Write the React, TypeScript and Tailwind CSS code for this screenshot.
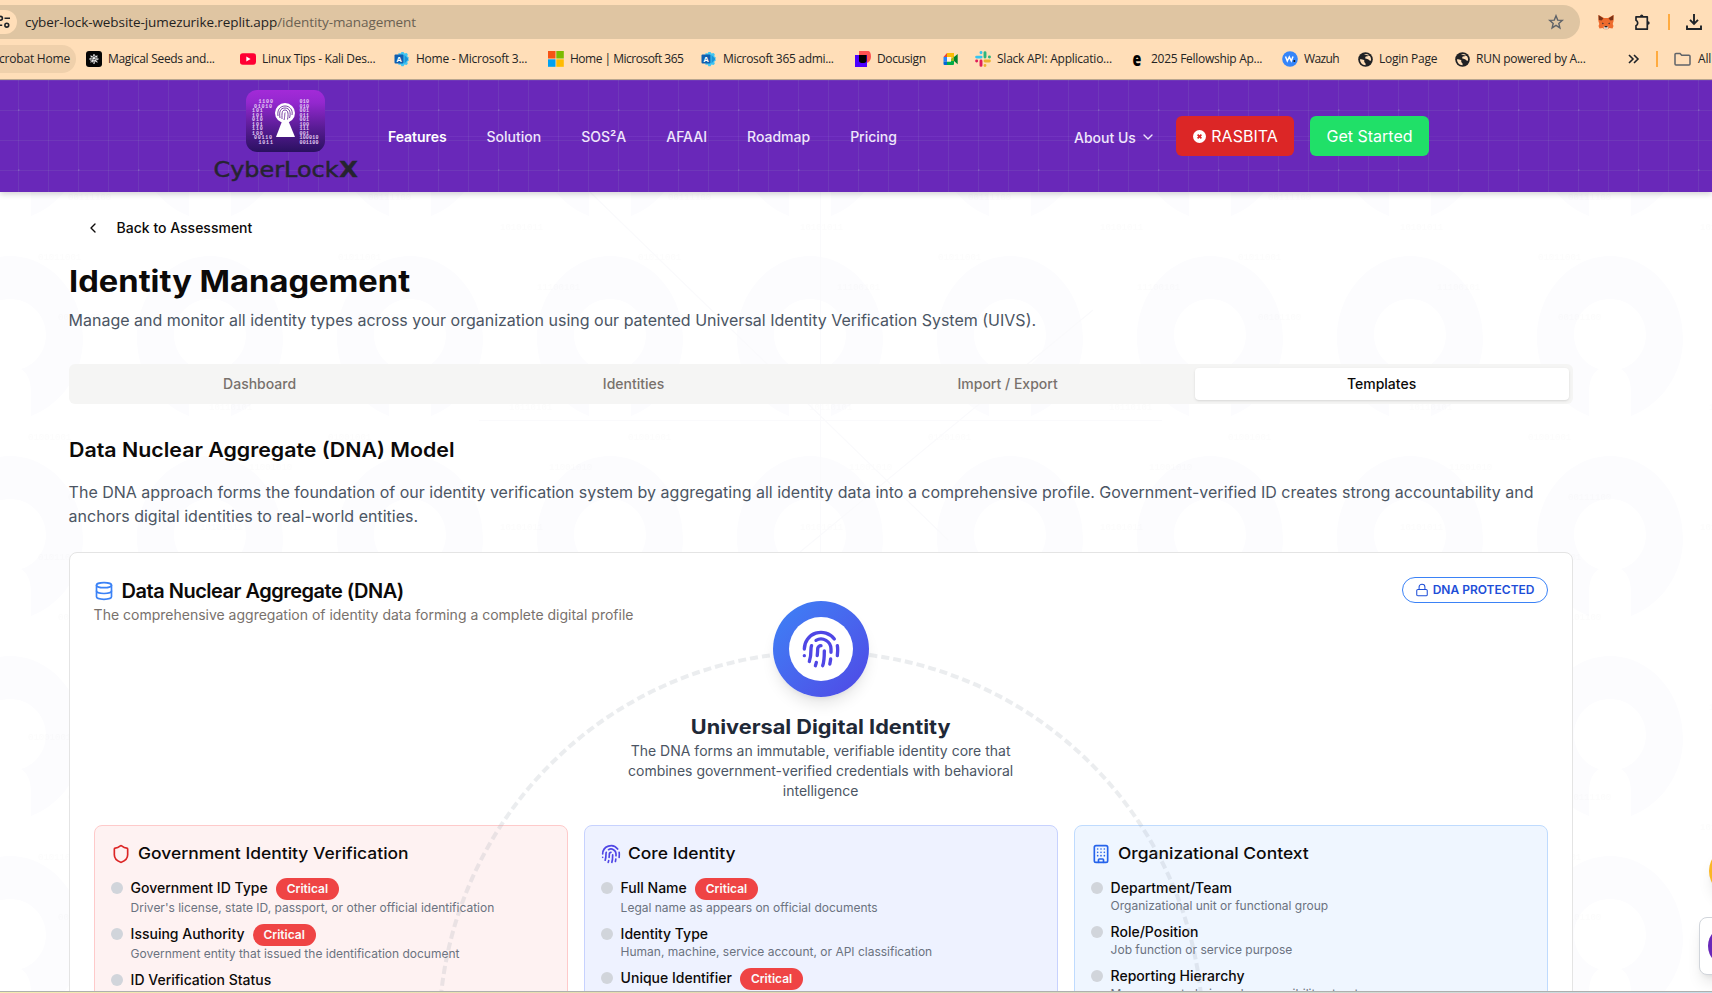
import React from "react";
import {
  Building,
  ChevronDown,
  ChevronLeft,
  Database,
  Fingerprint,
  Lock,
  Shield,
} from "lucide-react";

/* ---------- Browser chrome icons ---------- */

const TuneIcon = () => (
  <svg width="16" height="16" viewBox="0 0 16 16" fill="none" stroke="#1f2328" strokeWidth="1.6" className="shrink-0">
    <circle cx="5.5" cy="4.3" r="1.9" />
    <path d="M9.5 4.3H15M1 11.2h6.2" />
    <circle cx="11.8" cy="11.2" r="1.9" />
  </svg>
);

const StarIcon = () => (
  <svg width="16" height="16" viewBox="0 0 16 16" fill="none" stroke="#5f6368" strokeWidth="1.4">
    <path d="M8 1.8l1.7 4.3 4.6.3-3.5 3 1.1 4.5L8 11.4l-3.9 2.5 1.1-4.5-3.5-3 4.6-.3z" />
  </svg>
);

const FoxIcon = () => (
  <svg width="16" height="16" viewBox="0 0 16 16">
    <path d="M0.5 1L6 4h4l5.5-3 .1 6-.9 3 .8 2-1 2.5-3-.6-2 1.4h-3L4.5 13.9 1.5 14.5.5 12l.8-2L.4 7z" fill="#ee6b2d" />
    <path d="M.5 1L5.5 4.5 3.5 6.5.8 6zM15.5 1l-5 3.5 2 2 2.7-.5z" fill="#7a3318" />
    <path d="M5.5 12.5h5L10 15H6z" fill="#d9cfc6" />
    <path d="M4 8.5l2 1.3-1.5.4zM12 8.5l-2 1.3 1.5.4z" fill="#2b2b33" />
    <path d="M6.5 12h3l-.5 1.3H7z" fill="#222" />
  </svg>
);

const PuzzleIcon = () => (
  <svg width="18" height="18" viewBox="0 0 18 18" fill="none" stroke="#1f2328" strokeWidth="1.7" strokeLinejoin="round">
    <path d="M3 3.8H14.300V16.200H3V12.800c1.100-.6 1.700-1.600 1.700-2.800S4.100 7.800 3 7.200z" />
    <path d="M7 3.300a1.700 1.700 0 0 1 3.400 0zM15 8.300a1.700 1.700 0 0 1 0 3.400z" fill="#1f2328" stroke="none" />
  </svg>
);

const DownloadIcon = () => (
  <svg width="16" height="16" viewBox="0 0 16 16" fill="none" stroke="#1f2328" strokeWidth="1.9">
    <path d="M8 0v9M4 5.8l4 4 4-4M1 11.5V15h14v-3.5" />
  </svg>
);

const FolderIcon = () => (
  <svg width="17" height="14" viewBox="0 0 17 14" fill="none" stroke="#5f6368" strokeWidth="1.5">
    <path d="M1 2.5a1 1 0 0 1 1-1h4l1.7 1.8H15a1 1 0 0 1 1 1V12a1 1 0 0 1-1 1H2a1 1 0 0 1-1-1z" />
  </svg>
);

const SeedsIcon = () => (
  <svg width="16" height="16" viewBox="0 0 16 16">
    <rect width="16" height="16" rx="3" fill="#050505" />
    <g stroke="#f4f4f4" strokeWidth="1.1" fill="none">
      <path d="M8 3v10M3.2 8h9.6M4.6 4.6l6.8 6.8M11.4 4.6l-6.8 6.8" strokeDasharray="2.4 0.6" />
      <circle cx="8" cy="8" r="3.2" strokeDasharray="1.2 0.8" />
    </g>
  </svg>
);

const YoutubeIcon = () => (
  <svg width="16" height="16" viewBox="0 0 16 16">
    <rect y="2.2" width="16" height="11.6" rx="2.8" fill="#ff0033" />
    <path d="M6.3 5.5v5L10.6 8z" fill="#fff" />
  </svg>
);

const AdminIcon = () => (
  <svg width="16" height="16" viewBox="0 0 16 16">
    <path d="M4.5 2l2 .6L7.5 1h2l1 1.6 2-.6 1.3 1.3-.6 2L15 6.8 14 8l1 1.3-1.8 1.4.6 2L12.5 14l-2-.5-1 1.7h-2l-1-1.7-2 .5z" fill="#41c5f2" />
    <path d="M10.5 4l4 4-4 4.5z" fill="#1a93d8" />
    <rect x="0.5" y="3.5" width="9" height="9" rx="1" fill="#0f5fb0" />
    <text x="5" y="10.6" fontSize="7.5" fontWeight="700" textAnchor="middle" fill="#fff" fontFamily="Open Sans, sans-serif">A</text>
  </svg>
);

const MicrosoftIcon = () => (
  <svg width="16" height="16" viewBox="0 0 16 16">
    <rect width="7.5" height="7.5" fill="#f65314" />
    <rect x="8.3" width="7.5" height="7.5" fill="#7cbb00" />
    <rect y="8.3" width="7.5" height="7.5" fill="#00a1f1" />
    <rect x="8.3" y="8.3" width="7.5" height="7.5" fill="#ffbb00" />
  </svg>
);

const DocusignIcon = () => (
  <svg width="16" height="16" viewBox="0 0 16 16">
    <path d="M4 0h9.5C15 0 16 2.5 16 5.5 16 9 14 12 11 12H4z" fill="#ff5252" />
    <rect y="4" width="12" height="12" fill="#4c00ff" />
    <path d="M4 4h7.5v5.5c0 1.5-1 2.5-2.5 2.5H6.5C5 12 4 11 4 9.5z" fill="#000" />
  </svg>
);

const MeetIcon = () => (
  <svg width="16" height="16" viewBox="0 0 16 16">
    <path d="M4 2h7v4H4z" fill="#fbbc04" />
    <path d="M4 2v4H.5z" fill="#ea4335" />
    <path d="M.5 6H4v4.5H.5z" fill="#2684fc" />
    <path d="M.5 10.5H4V14H1.5a1 1 0 0 1-1-1z" fill="#0066da" />
    <path d="M4 10.5h4V8l3-2.5V13a1 1 0 0 1-1 1H4z" fill="#00ac47" />
    <path d="M11 6l3.7-3v10.3L11 10z" fill="#00832d" />
    <path d="M8 6h3v4H8z" fill="#fbbc04" opacity=".6" />
    <path d="M4 6h4v4.5H4z" fill="#fff3e2" />
  </svg>
);

const SlackIcon = () => (
  <svg width="16" height="16" viewBox="0 0 16 16" strokeWidth="2.9" strokeLinecap="round" fill="none">
    <path d="M1.6 6.1h4.5M6 1.5v.2" stroke="#36c5f0" />
    <path d="M10 1.6v4.5M14.4 6h.1" stroke="#2eb67d" />
    <path d="M14.4 10H10M10 14.4v.1" stroke="#ecb22e" />
    <path d="M6 14.4V10M1.6 10h.1" stroke="#e01e5a" />
  </svg>
);

const WazuhIcon = () => (
  <svg width="16" height="16" viewBox="0 0 16 16">
    <circle cx="8" cy="8" r="7.8" fill="#3585f9" />
    <path d="M3.5 5.5L5.3 10l2-4 2 4L11 5.5" stroke="#fff" strokeWidth="1.5" fill="none" />
    <circle cx="12.3" cy="10" r="1" fill="#111" />
  </svg>
);

const GlobeIcon = () => (
  <svg width="15" height="15" viewBox="0 0 15 15">
    <circle cx="7.5" cy="7.5" r="7.3" fill="#202124" />
    <path d="M2 7.2c1.5 0 3.2.2 4 .9.9.7-.3 1.7.6 2.4.8.6 1.3 1.2.9 2.7C4.3 13.1 2 10.5 2 7.2z" fill="#ffdeb8" />
    <path d="M6 2.3c1.7-.6 3.5-.3 4.7.5l-1 1.4-2 .4L7 6.2l2.2.9c1.2 0 1.5 1.1 2.3 1.5l1.5.1c.3-2-.3-3.7-1.3-4.7" fill="#ffdeb8" />
  </svg>
);

/* ---------- Browser chrome ---------- */

const bookmarks: { icon: React.ReactNode; label: string; item: string; text: string }[] = [
  { icon: <SeedsIcon />, label: "Magical Seeds and...", item: "w-[154px]", text: "tracking-[-0.3px]" },
  { icon: <YoutubeIcon />, label: "Linux Tips - Kali Des...", item: "w-[154px]", text: "tracking-[-0.28px]" },
  { icon: <AdminIcon />, label: "Home - Microsoft 3...", item: "w-[154px]", text: "tracking-[-0.25px]" },
  { icon: <MicrosoftIcon />, label: "Home | Microsoft 365", item: "w-[153px]", text: "tracking-[-0.5px]" },
  { icon: <AdminIcon />, label: "Microsoft 365 admi...", item: "w-[154px]", text: "tracking-[-0.32px]" },
  { icon: <DocusignIcon />, label: "Docusign", item: "w-[88px]", text: "tracking-[-0.38px]" },
  { icon: <MeetIcon />, label: "", item: "w-[32px]", text: "" },
  { icon: <SlackIcon />, label: "Slack API: Applicatio...", item: "w-[154px]", text: "tracking-[-0.24px]" },
  {
    icon: (
      <span className="w-4 scale-x-75 text-center font-['Open_Sans',sans-serif] text-[19px] leading-4 font-extrabold text-black">
        e
      </span>
    ),
    label: "2025 Fellowship Ap...",
    item: "w-[153px]",
    text: "tracking-[-0.28px]",
  },
  { icon: <WazuhIcon />, label: "Wazuh", item: "w-[75px]", text: "tracking-[-0.6px]" },
  { icon: <GlobeIcon />, label: "Login Page", item: "w-[97px]", text: "tracking-[-0.25px]" },
  { icon: <GlobeIcon />, label: "RUN powered by A...", item: "w-[172px]", text: "tracking-[-0.26px]" },
];

function BrowserChrome() {
  return (
    <div className="h-20 shrink-0 overflow-hidden border-b border-[#b9a68f] bg-[#ffdeb8] font-['Open_Sans','Noto_Sans',sans-serif] text-[#242424]">
      <div className="flex pt-[5px]">
        <div className="flex h-[34px] w-[1580px] items-center rounded-r-full bg-[#dfc5a2]">
          <div className="flex h-6 w-[17px] items-center justify-end overflow-hidden rounded-r-full bg-[#ffdeb8] pr-1.5">
            <TuneIcon />
          </div>
          <div className="ml-2 flex-1 text-[13.5px] tracking-[-0.08px] whitespace-nowrap text-[#1f1f1f]">
            cyber-lock-website-jumezurike.replit.app
            <span className="text-[#6b6152]">/identity-management</span>
          </div>
          <div className="mr-4">
            <StarIcon />
          </div>
        </div>
        <div className="ml-[18px] flex items-center">
          <FoxIcon />
          <div className="ml-[19px]">
            <PuzzleIcon />
          </div>
          <div className="ml-[17px] h-4 w-0.5 bg-[#ffab40]" />
          <div className="ml-4">
            <DownloadIcon />
          </div>
        </div>
      </div>
      <div className="mt-1.5 flex h-7 items-center text-[12px] whitespace-nowrap">
        <div className="flex h-7 w-[76px] shrink-0 items-center justify-end overflow-hidden rounded-r-full bg-[#efd0ab] pr-1.5 tracking-[-0.2px]">
          Acrobat Home
        </div>
        <div className="ml-2.5 flex shrink-0 items-center">
          {bookmarks.map((b, i) => (
            <div key={i} className={`flex shrink-0 items-center gap-1.5 ${b.item}`}>
              <span className="flex w-4 shrink-0 justify-center">{b.icon}</span>
              <span className={b.text}>{b.label}</span>
            </div>
          ))}
        </div>
        <svg width="12" height="10" viewBox="0 0 12 10" fill="none" stroke="#1f2328" strokeWidth="1.6" className="ml-0.5 shrink-0">
          <path d="M1 1l4 4-4 4M6 1l4 4-4 4" />
        </svg>
        <div className="ml-4 h-4 w-0.5 shrink-0 bg-[#ffab40]" />
        <div className="ml-4 shrink-0">
          <FolderIcon />
        </div>
        <span className="ml-[7px] tracking-[-0.2px]">All</span>
      </div>
    </div>
  );
}

/* ---------- Site header ---------- */

const leftBits = ["1100", "01010", "101", "101", "010", "101", "110", "100", "00110", "1011"];
const leftBitsX = [12.5, 8, 6, 6, 6, 6, 6, 6, 8, 12.5];
const rightBits = ["010", "010", "001", "011", "001", "100", "111", "001", "100010", "001100"];

function Logo() {
  return (
    <div className="flex w-[143px] flex-col items-center">
      <svg width="79" height="62" viewBox="0 0 79 62">
        <defs>
          <linearGradient id="tile" x1="0" y1="0" x2="0" y2="1">
            <stop offset="0" stopColor="#a32ad8" />
            <stop offset="0.2" stopColor="#9428cf" />
            <stop offset="0.6" stopColor="#5a1c96" />
            <stop offset="1" stopColor="#2a1160" />
          </linearGradient>
        </defs>
        <rect width="79" height="62" rx="11" fill="url(#tile)" />
        <g fill="#e4cdf4" fontFamily="Liberation Mono, monospace" fontSize="5" fontWeight="700">
          {leftBits.map((t, i) => (
            <text key={i} x={leftBitsX[i]} y={13 + i * 4.5} textLength={t.length * 3.6}>
              {t}
            </text>
          ))}
          {rightBits.map((t, i) => (
            <text key={i} x="53.5" y={13 + i * 4.5} textLength={t.length * 3.15}>
              {t}
            </text>
          ))}
        </g>
        <path d="M36.5 30h5.5l7 17H30z" fill="#fff" />
        <circle cx="39" cy="23" r="10" fill="#fff" />
        <g fill="none" stroke="#6a2a9c" strokeWidth="0.9">
          <path d="M32 26c-1-6 2-10 7-10s8 4 7 9" />
          <path d="M34 28c-1-6 0-10 5-10s6 5 4.5 10" />
          <path d="M36 29c0-5-.5-9 3-9s3.5 5 2.5 9.5" />
          <path d="M38 30c1-3 .5-7 1.2-7.5" />
        </g>
      </svg>
      <svg width="143" height="27" viewBox="0 0 143 27" className="mt-1 overflow-visible" fill="#262430" stroke="#262430" fontFamily="DejaVu Sans, sans-serif">
        <text x="-0.5" y="21" fontSize="22" strokeWidth="0.5" textLength="125" lengthAdjust="spacingAndGlyphs">
          CyberLock
        </text>
        <text x="125" y="21" fontSize="22" fontWeight="700" strokeWidth="0.3" textLength="19" lengthAdjust="spacingAndGlyphs">
          X
        </text>
      </svg>
    </div>
  );
}

function SiteHeader() {
  return (
    <header className="relative z-20 h-28 shrink-0 bg-[#6928b9] shadow-[0_2px_6px_rgba(0,0,0,0.18)]">
      <svg width="1712" height="112" className="absolute inset-0">
        <defs>
          <pattern id="grid" width="60" height="60" x="16" y="0" patternUnits="userSpaceOnUse">
            <path d="M0.5 0V60M30.5 0V60M0 0.5H60M0 30.5H60" stroke="#a7e0c0" strokeOpacity="0.09" />
            <rect x="0" y="29" width="1.5" height="2" fill="#fff" fillOpacity="0.1" />
          </pattern>
          <linearGradient id="beam">
            <stop offset="0" stopColor="#fff" stopOpacity="0" />
            <stop offset="0.5" stopColor="#9d5cf0" stopOpacity="0.15" />
            <stop offset="1" stopColor="#fff" stopOpacity="0" />
          </linearGradient>
        </defs>
        <rect x="-2" width="1714" height="112" fill="url(#grid)" transform="translate(2 0)" />
        <rect x="20" y="56" width="1600" height="1" fill="url(#beam)" />
      </svg>
      <div className="relative flex h-28 items-center pl-[214px] font-['Inter',sans-serif]">
        <div className="pt-px">
          <Logo />
        </div>
        <nav className="ml-[31px] flex w-[686px] items-center gap-10 text-[14px] font-medium text-[#efe6fb]">
          <span className="font-semibold tracking-[-0.05px] text-white">Features</span>
          <span>Solution</span>
          <span>SOS²A</span>
          <span>AFAAI</span>
          <span>Roadmap</span>
          <span>Pricing</span>
        </nav>
        <div className="mt-0.5 flex w-[102px] items-center text-[14px] font-medium text-[#efe6fb]">
          <span>About Us</span>
          <ChevronDown size={16} className="ml-1" strokeWidth={2} />
        </div>
        <button className="flex h-10 w-[118px] items-center justify-center gap-[5px] rounded-md bg-[#dc2626] pl-px text-[16px] text-white">
          <svg width="13" height="13" viewBox="0 0 13 13">
            <circle cx="6.5" cy="6.5" r="6.5" fill="#fff" />
            <path d="M4.6 4.6l3.8 3.8M8.4 4.6L4.6 8.4" stroke="#dc2626" strokeWidth="1.7" />
          </svg>
          RASBITA
        </button>
        <button className="ml-4 flex h-10 w-[119px] items-center justify-center rounded-md bg-[#20e068] text-[16px] text-white">
          Get Started
        </button>
      </div>
    </header>
  );
}

/* ---------- Page backdrop ---------- */

const bits: [number, number, string][] = [
  [68, 197, "00111100"],
  [200, 227, "10101011"],
  [38, 257, "01011001"],
  [237, 287, "11100101"],
  [58, 317, "00101100"],
  [209, 407, "10110101"],
  [28, 437, "01001001"],
  [249, 467, "11001010"],
];

function Backdrop() {
  return (
    <svg width="1712" height="993" className="absolute top-0 left-0">
      <defs>
        <pattern id="locks" width="200" height="200" x="-90" y="36" patternUnits="userSpaceOnUse">
          <path
            d="M79 180C48 168 27 138 27 102c0-45 33-82 73-82s73 37 73 82c0 36-21 66-52 78v-24c0-10-3-19-10-23 17-5 25-21 25-34 0-20-16-36-36-36s-36 16-36 36c0 13 8 29 25 34-7 4-10 13-10 23z"
            fill="#fcfcfe"
          />
        </pattern>
        <pattern id="bits" width="300" height="300" patternUnits="userSpaceOnUse">
          <g fill="#000" fillOpacity="0.01" fontFamily="Liberation Mono, monospace" fontSize="9">
            {bits.map(([x, y, t]) => (
              <text key={t} x={x} y={(y % 300) + 3}>
                {t}
              </text>
            ))}
          </g>
        </pattern>
      </defs>
      <rect width="1712" height="993" fill="#ffffff" />
      <rect width="1700" height="993" fill="url(#locks)" />
      <rect width="1712" height="993" fill="url(#bits)" />
      <g stroke="#fafafc" strokeWidth="1.2">
        <path d="M479 420.5H1162M820.5 192V552M590 192L948 540M1093 310L800 552" />
      </g>
    </svg>
  );
}

/* ---------- Cards ---------- */

type Field = { label: string; desc?: string; critical?: boolean };

function FieldCard({ title, icon, box, fields }: { title: string; icon: React.ReactNode; box: string; fields: Field[] }) {
  return (
    <div className={`h-[300px] rounded-lg border p-4 ${box}`}>
      <div className="flex h-6 items-center gap-2">
        {icon}
        <h4 className="-ml-px origin-left scale-x-[1.09] pb-0.5 text-[16px] font-medium text-[#0c0a09]">{title}</h4>
      </div>
      <ul className="mt-3 space-y-2">
        {fields.map((f) => (
          <li key={f.label} className="flex gap-2">
            <span className="mt-1 h-3 w-3 shrink-0 rounded-full bg-[#d1d5db]" />
            <div>
              <div className="flex items-start gap-2">
                <span className="text-[14px] leading-5 font-medium text-[#0c0a09]">{f.label}</span>
                {f.critical && (
                  <span className="rounded-full border border-transparent bg-[#ef4444] px-2.5 py-0.5 text-[12px] leading-4 font-semibold text-[#fafaf9]">
                    Critical
                  </span>
                )}
              </div>
              {f.desc && <p className="text-[12px] leading-4 text-[#6b7280]">{f.desc}</p>}
            </div>
          </li>
        ))}
      </ul>
    </div>
  );
}

const governmentFields: Field[] = [
  { label: "Government ID Type", desc: "Driver's license, state ID, passport, or other official identification", critical: true },
  { label: "Issuing Authority", desc: "Government entity that issued the identification document", critical: true },
  { label: "ID Verification Status" },
];
const coreFields: Field[] = [
  { label: "Full Name", desc: "Legal name as appears on official documents", critical: true },
  { label: "Identity Type", desc: "Human, machine, service account, or API classification" },
  { label: "Unique Identifier", critical: true },
];
const orgFields: Field[] = [
  { label: "Department/Team", desc: "Organizational unit or functional group" },
  { label: "Role/Position", desc: "Job function or service purpose" },
  { label: "Reporting Hierarchy", desc: "Management chain and responsibility structure" },
];

function DnaCard() {
  return (
    <section className="relative mt-6 h-[700px] overflow-hidden rounded-lg border border-[#e4e4e4] bg-white p-6">
      <div className="flex h-12 items-start justify-between">
        <div>
          <div className="flex h-7 items-center gap-2">
            <Database size={20} color="#3b82f6" />
            <h3 className="text-[20px] leading-7 font-semibold tracking-[-0.5px] text-[#0c0a09]">Data Nuclear Aggregate (DNA)</h3>
          </div>
          <p className="text-[14px] leading-5 text-[#78716c]">
            The comprehensive aggregation of identity data forming a complete digital profile
          </p>
        </div>
        <div className="flex h-[26px] w-[146px] items-center justify-center gap-1 rounded-full border border-[#3b82f6] text-[12px] font-semibold whitespace-nowrap text-[#1d4ed8]">
          <Lock size={14} strokeWidth={1.8} />
          DNA PROTECTED
        </div>
      </div>

      <div className="relative z-10 -mt-6 flex flex-col items-center">
        <div className="flex h-24 w-24 items-center justify-center rounded-full bg-linear-to-br from-[#3b82f6] to-[#4f46e5] shadow-lg">
          <div className="flex h-16 w-16 items-center justify-center rounded-full bg-white">
            <Fingerprint size={40} color="#4f46e5" />
          </div>
        </div>
        <h3 className="mt-4 scale-x-[1.085] text-[20px] leading-7 font-bold text-[#1f2937]">Universal Digital Identity</h3>
        <p className="w-[400px] text-center text-[14px] leading-5 text-[#4b5563]">
          The DNA forms an immutable, verifiable identity core that combines government-verified credentials with behavioral intelligence
        </p>
      </div>

      <div className="mt-6 grid grid-cols-3 gap-4">
        <FieldCard
          title="Government Identity Verification"
          icon={<Shield size={20} color="#dc2626" />}
          box="border-[#fecaca] bg-[#fef2f2]"
          fields={governmentFields}
        />
        <FieldCard
          title="Core Identity"
          icon={<Fingerprint size={20} color="#4f46e5" />}
          box="border-[#c7d2fe] bg-[#eef2ff]"
          fields={coreFields}
        />
        <FieldCard
          title="Organizational Context"
          icon={<Building size={20} color="#2563eb" />}
          box="border-[#bfdbfe] bg-[#eff6ff]"
          fields={orgFields}
        />
      </div>

      <svg width="772" height="772" className="absolute top-[95px] left-1/2 -translate-x-1/2">
        <circle cx="386" cy="386" r="382" fill="none" stroke="#9ca3af" strokeOpacity="0.2" strokeWidth="4" strokeDasharray="8 4" />
      </svg>
    </section>
  );
}

const tabs = ["Dashboard", "Identities", "Import / Export", "Templates"];

export default function App() {
  return (
    <div className="flex h-[993px] w-[1712px] flex-col overflow-hidden bg-white font-['Inter',sans-serif]">
      <BrowserChrome />
      <div className="relative flex h-[911px] shrink-0 flex-col overflow-hidden">
        <div className="absolute -top-20 left-0">
          <Backdrop />
        </div>
        <SiteHeader />
        <main className="relative ml-[68.6px] w-[1504px] pt-4">
          <button className="flex h-10 items-center gap-4 px-4 pb-px text-[14px] font-medium text-[#0c0a09]">
            <ChevronLeft size={16} />
            Back to Assessment
          </button>
          <h1 className="mt-[15px] mb-[9px] origin-left scale-x-[1.09] text-[30px] leading-9 font-bold text-[#0c0a09]">Identity Management</h1>
          <p className="text-[16px] leading-6 text-[#4b5563]">
            Manage and monitor all identity types across your organization using our patented Universal Identity Verification System (UIVS).
          </p>
          <div className="mt-8 grid h-10 grid-cols-4 rounded-md bg-[#f5f5f4] p-1 text-[14px] font-medium text-[#78716c]">
            {tabs.map((t) => (
              <div
                key={t}
                className={
                  t === "Templates"
                    ? "flex items-center justify-center rounded-sm bg-white pb-px text-[#0c0a09] shadow-sm"
                    : "flex items-center justify-center pb-px"
                }
              >
                {t}
              </div>
            ))}
          </div>
          <h2 className="mt-8 origin-left scale-x-[1.068] text-[20px] leading-7 font-semibold text-[#0c0a09]">
            Data Nuclear Aggregate (DNA) Model
          </h2>
          <p className="mt-4 text-[16px] leading-6 text-[#4b5563]">
            The DNA approach forms the foundation of our identity verification system by aggregating all identity data into a comprehensive profile.
            Government-verified ID creates strong accountability and anchors digital identities to real-world entities.
          </p>
          <DnaCard />
        </main>

        <div className="absolute top-[767px] left-[1709px] h-12 w-12 rounded-full bg-[#fbb724] shadow-lg" />
        <div className="absolute top-[837px] left-[1699px] h-[58px] w-[120px] rounded-lg border border-[#d1d5db] bg-white p-2 shadow-lg">
          <div className="h-10 w-10 rounded-full bg-[#6928b9]" />
        </div>
      </div>
      <div className="h-px shrink-0 bg-[#aeb0ae]" />
      <div className="h-px shrink-0 bg-linear-to-r from-[#f3ecb0] via-[#e0d8b0] to-[#c5dce8]" />
    </div>
  );
}
